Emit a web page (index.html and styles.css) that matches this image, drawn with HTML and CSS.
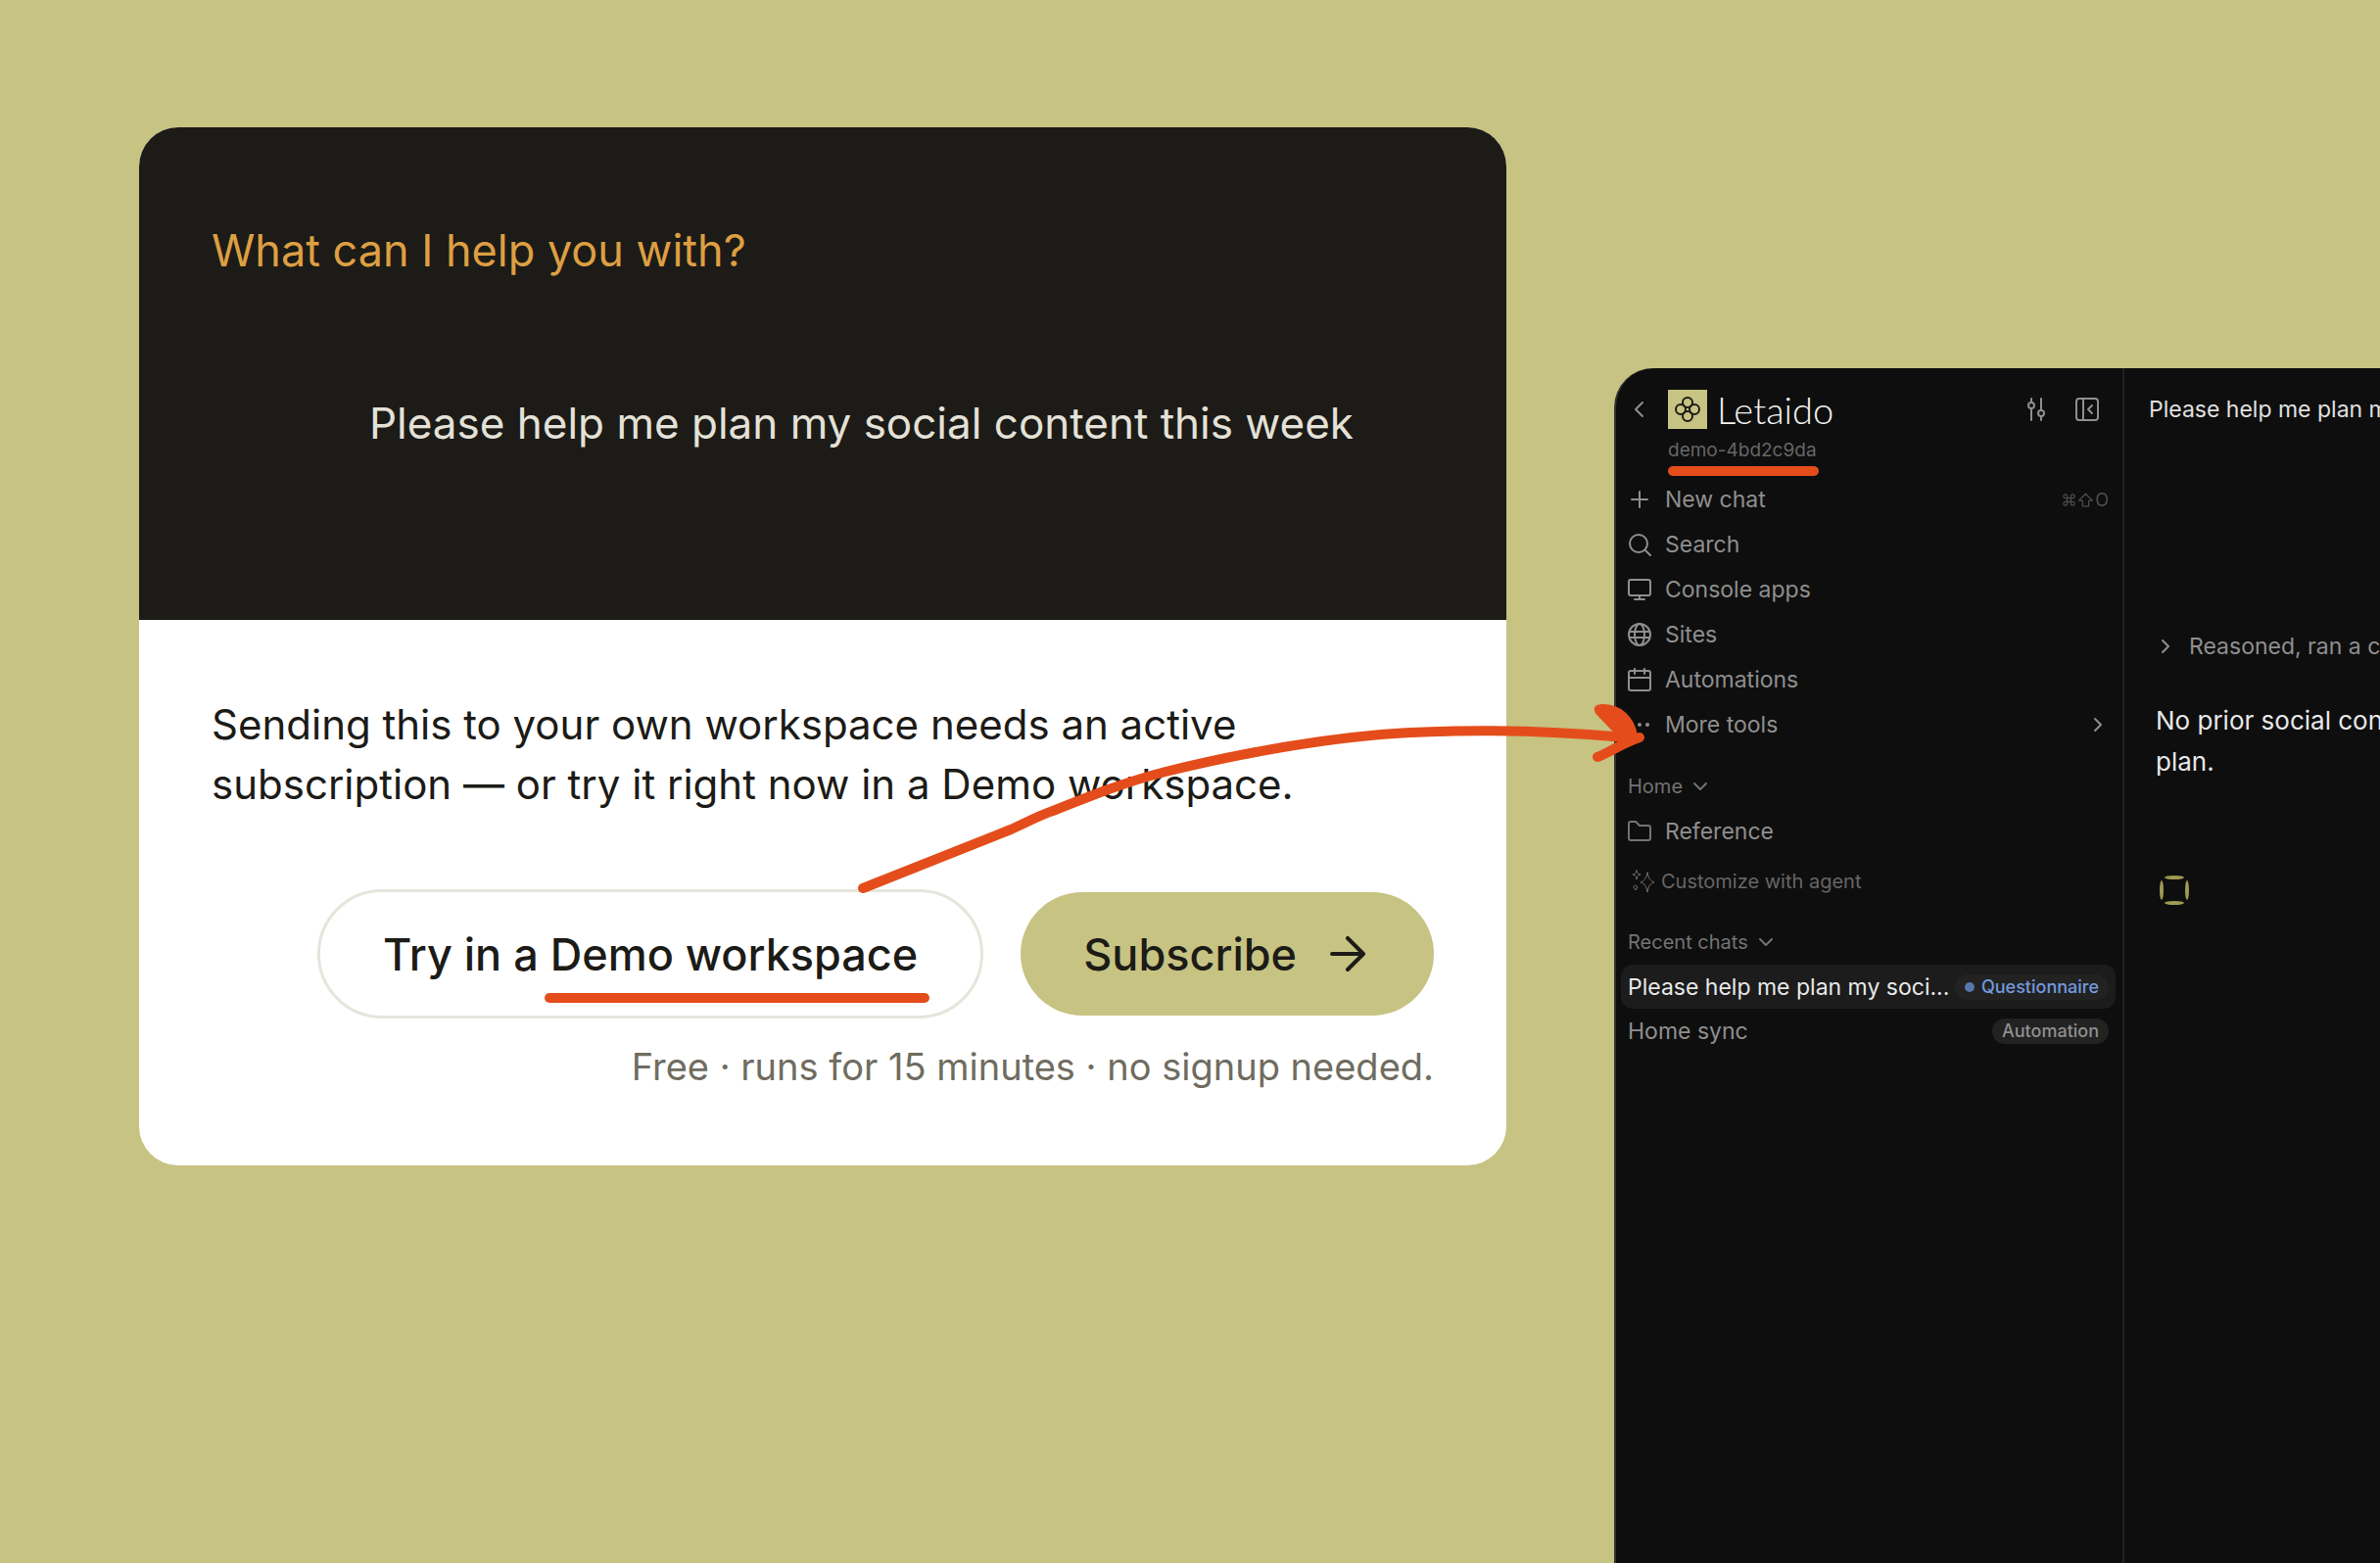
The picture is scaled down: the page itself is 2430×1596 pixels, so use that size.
FILE: index.html
```html
<!DOCTYPE html>
<html lang="en">
<head>
<meta charset="utf-8">
<title>Letaido</title>
<link rel="stylesheet" href="styles.css">
</head>
<body>
<main class="stage">
  <section class="card">
    <div class="card-top">
      <p class="prompt-label">What can I help you with?</p>
      <p class="prompt-text">Please help me plan my social content this week</p>
    </div>
    <div class="card-bottom">
      <p class="notice">Sending this to your own workspace needs an active subscription — or try it right now in a Demo workspace.</p>
      <div class="actions">
        <button class="btn btn-outline" type="button"><span>Try in a <span class="marked">Demo workspace</span></span></button>
        <button class="btn btn-solid" type="button">
          <span>Subscribe</span>
          <svg class="btn-arrow" viewBox="0 0 36 36" aria-hidden="true"><path d="M2 18H34M18 2L34 18L18 34"/></svg>
        </button>
      </div>
      <p class="footnote">Free · runs for 15 minutes · no signup needed.</p>
    </div>
    <svg class="pointer" viewBox="870 710 820 210" aria-hidden="true">
      <path class="pointer-line" d="M881 907L1032 847C1050 839 1060 833 1075 828C1110 814 1150 798 1190 788C1260 771 1340 756 1410 750C1490 744 1580 746 1660 753"/>
      <path class="pointer-line" d="M1631 773C1646 767 1656 759 1674 753"/>
      <path class="pointer-head" d="M1634 720C1655 719 1668 733 1671 751L1655 757C1650 747 1640 739 1630 728C1627 723 1630 720 1634 720Z"/>
    </svg>
  </section>

  <section class="app">
    <aside class="sidebar">
      <header class="brand-row">
        <button class="icon-btn back" type="button" aria-label="Back"><svg class="icon" viewBox="0 0 24 24"><path d="M15 5l-7 7 7 7"/></svg></button>
        <svg class="brand-mark" viewBox="0 0 40 40" aria-hidden="true">
          <rect width="40" height="40"/>
          <circle cx="20" cy="13" r="5"/><circle cx="27" cy="20" r="5"/><circle cx="20" cy="27" r="5"/><circle cx="13" cy="20" r="5"/>
        </svg>
        <span class="brand-name">Letaido</span>
        <button class="icon-btn" type="button" aria-label="Settings"><svg class="icon" viewBox="0 0 24 24"><path d="M7 1v4M7 11v12M17 1v12M17 19v4"/><circle cx="7" cy="8" r="3"/><circle cx="17" cy="16" r="3"/></svg></button>
        <button class="icon-btn" type="button" aria-label="Collapse sidebar"><svg class="icon" viewBox="0 0 24 24"><rect x="1" y="1" width="22" height="22" rx="3"/><path d="M8 1v22M17 8l-4 4 4 4"/></svg></button>
      </header>
      <p class="workspace"><span class="marked">demo-4bd2c9da</span></p>

      <nav class="menu">
        <a class="item" href="#"><svg class="icon" viewBox="0 0 24 24"><path d="M12 4v16M4 12h16"/></svg>New chat<kbd class="keys"><svg class="key" viewBox="0 0 24 24"><path d="M9 9h6v6H9zM9 9V6a3 3 0 1 0-3 3h3M15 9h3a3 3 0 1 0-3-3v3M15 15v3a3 3 0 1 0 3-3h-3M9 15H6a3 3 0 1 0 3 3v-3"/></svg><svg class="key" viewBox="0 0 24 24"><path d="M12 2L1 13h6v9h10v-9h6z"/></svg>O</kbd></a>
        <a class="item" href="#"><svg class="icon" viewBox="0 0 24 24"><circle cx="11" cy="11" r="9"/><path d="M18 18l5 5"/></svg>Search</a>
        <a class="item" href="#"><svg class="icon" viewBox="0 0 24 24"><rect x="1" y="2" width="22" height="16" rx="2"/><path d="M12 18v4M7 22h10"/></svg>Console apps</a>
        <a class="item" href="#"><svg class="icon" viewBox="0 0 24 24"><circle cx="12" cy="12" r="11"/><ellipse cx="12" cy="12" rx="5" ry="11"/><path d="M2 9h20M2 15h20"/></svg>Sites</a>
        <a class="item" href="#"><svg class="icon" viewBox="0 0 24 24"><rect x="1" y="3" width="22" height="20" rx="2"/><path d="M1 10h22M7 1v5M17 1v5"/></svg>Automations</a>
        <a class="item" href="#"><svg class="icon dots" viewBox="0 0 24 24"><circle cx="4" cy="12" r="2"/><circle cx="12" cy="12" r="2"/><circle cx="20" cy="12" r="2"/></svg>More tools<svg class="chevron end" viewBox="0 0 16 16"><path d="M5 2l6 6-6 6"/></svg></a>
      </nav>

      <h2 class="group">Home<svg class="chevron" viewBox="0 0 16 16"><path d="M2 5l6 6 6-6"/></svg></h2>
      <a class="item" href="#"><svg class="icon folder" viewBox="0 0 24 24"><path d="M1 4a2 2 0 0 1 2-2h5l4 4h9a2 2 0 0 1 2 2v11a2 2 0 0 1-2 2H3a2 2 0 0 1-2-2z"/></svg>Reference</a>
      <a class="customize" href="#"><svg class="icon sparkles" viewBox="0 0 24 24"><path d="M16 3c1 6 3 8 7 10c-4 1-6 4-7 10c-1-6-3-9-7-10c4-2 6-4 7-10zM5 1c1 3 1 3 4 4c-3 1-3 1-4 5c-1-4-1-4-4-5c3-1 3-1 4-4zM4 16l2 2-2 3-2-3z"/></svg>Customize with agent</a>

      <h2 class="group">Recent chats<svg class="chevron" viewBox="0 0 16 16"><path d="M2 5l6 6 6-6"/></svg></h2>
      <a class="chat chat-active" href="#"><span class="chat-title">Please help me plan my soci...</span><span class="tag tag-blue">Questionnaire</span></a>
      <a class="chat" href="#"><span class="chat-title">Home sync</span><span class="tag">Automation</span></a>
    </aside>

    <section class="thread">
      <h1 class="thread-title">Please help me plan my social content this week</h1>
      <button class="reasoning" type="button"><svg class="chevron" viewBox="0 0 16 16"><path d="M5 2l6 6-6 6"/></svg>Reasoned, ran a command</button>
      <p class="answer">No prior social content<br>plan.</p>
      <svg class="spinner" viewBox="0 0 32 32" aria-hidden="true"><ellipse cx="16" cy="3" rx="10" ry="2"/><ellipse cx="16" cy="29" rx="10" ry="2"/><ellipse cx="3" cy="16" rx="2" ry="10"/><ellipse cx="29" cy="16" rx="2" ry="10"/></svg>
    </section>
  </section>
</main>
</body>
</html>
```
FILE: styles.css
```css
* { box-sizing: border-box; }

body {
  margin: 0;
  background: #c7c382;
  font-family: Inter, "Liberation Sans", sans-serif;
  overflow: hidden;
}

p, h1, h2 { margin: 0; font-weight: 400; }
a { color: inherit; text-decoration: none; }
button { font: inherit; color: inherit; background: none; border: 0; padding: 0; cursor: pointer; }
svg { display: block; flex: none; fill: none; stroke: currentColor; stroke-linecap: round; stroke-linejoin: round; }

.stage {
  min-height: 100vh;
  display: grid;
  grid-template-columns: minmax(0, 1396px) minmax(0, 1fr);
  column-gap: 110px;
  padding-left: 142px;
}

/* Prompt card */
.card {
  position: relative;
  align-self: start;
  margin-top: 130px;
  border-radius: 40px;
  background: #fff;
  color: #1c1b17;
}
.card-top {
  height: 503px;
  padding: 98px 74px 0;
  border-radius: 40px 40px 0 0;
  background: #1c1b17;
  line-height: 56px;
}
.prompt-label { color: #dd9f42; font-size: 45px; }
.prompt-text { margin: 120px 82px 0 0; text-align: right; color: #e4e1d8; font-size: 44px; }
.card-bottom { padding: 76px 74px 76px; }
.notice { font-size: 42px; line-height: 61px; }
.actions { display: flex; justify-content: flex-end; align-items: center; gap: 38px; margin-top: 77px; }
.btn { display: flex; align-items: center; border-radius: 66px; font-size: 45px; font-weight: 500; white-space: nowrap; }
.btn-outline { height: 132px; padding: 0 64px; border: 3px solid #e6e5dc; }
.btn-solid { height: 126px; padding: 0 70px 0 64px; gap: 34px; background: #c7c382; }
.btn-arrow { width: 36px; height: 36px; stroke-width: 4; }
.footnote { margin-top: 24px; text-align: right; color: #6f6c60; font-size: 38px; line-height: 50px; }

/* Hand-drawn marks */
.marked { position: relative; }
.marked::after {
  content: "";
  position: absolute;
  left: -6px;
  right: -12px;
  bottom: -22px;
  height: 10px;
  border-radius: 5px;
  background: #e44d1b;
}
.workspace .marked::after { left: 0; right: -2px; bottom: -15px; }
.pointer { position: absolute; right: -152px; top: 580px; width: 820px; height: 210px; z-index: 2; color: #e44d1b; pointer-events: none; }
.pointer-line { stroke-width: 10; }
.pointer-head { fill: currentColor; stroke-width: 2; }

/* App window */
.app {
  display: grid;
  grid-template-columns: 519px minmax(0, 1fr);
  margin-top: 376px;
  border-left: 2px solid #333430;
  border-radius: 40px 0 0 0;
  background: #0e0e0e;
  color: #8f8f8f;
  overflow: hidden;
}
.sidebar { display: flex; flex-direction: column; padding: 22px 7px 0 5px; border-right: 2px solid #222; font-size: 23px; }
.icon { width: 24px; height: 24px; stroke-width: 2; }
.dots { fill: currentColor; stroke: none; }
.folder, .sparkles { color: #737373; }
.sparkles { stroke-width: 1; }
.brand-row { display: flex; align-items: center; height: 40px; padding: 0 17px 0 7px; }
.icon-btn { display: flex; margin-left: 28px; }
.back { margin: 0 17px 0 0; }
.brand-mark { width: 40px; height: 40px; fill: none; stroke: #1c1b17; stroke-width: 2; }
.brand-mark rect { fill: #c7c382; stroke: none; }
.brand-name { flex: 1; margin-left: 10px; color: #f2f2f2; font-family: Lato, Inter, sans-serif; font-weight: 300; font-size: 38px; line-height: 40px; }
.workspace { padding: 8px 0 0 48px; color: #666; font-size: 19px; line-height: 28px; }
.menu { margin-top: 13px; }
.item { display: flex; align-items: center; gap: 14px; height: 46px; padding: 0 7px 0 7px; }
.keys { display: flex; align-items: center; gap: 2px; margin-left: auto; color: #4d4d4d; font: inherit; font-size: 18px; }
.key { width: 15px; height: 15px; stroke-width: 2; }
.chevron { width: 16px; height: 16px; stroke-width: 2; }
.end { margin: 0 3px 0 auto; }
.group { display: flex; align-items: center; gap: 10px; height: 40px; margin: 20px 0 3px; padding-left: 7px; color: #737373; font-size: 20px; }
.customize { display: flex; align-items: center; gap: 6px; height: 44px; margin-top: 6px; padding-left: 11px; color: #666; font-size: 20px; }
.chat { display: flex; align-items: center; justify-content: space-between; height: 45px; padding: 0 7px; border-radius: 12px; white-space: nowrap; }
.chat-active { background: #1c1c1c; color: #e8e8e8; }
.tag { display: flex; align-items: center; gap: 7px; height: 26px; padding: 0 10px; border-radius: 13px; background: #222; color: #8f8f8f; font-size: 18px; font-weight: 500; }
.tag-blue { color: #7399dd; }
.tag-blue::before { content: ""; width: 10px; height: 10px; border-radius: 5px; background: #5577aa; }

.thread { display: flex; flex-direction: column; align-items: flex-start; padding: 28px 0 0 25px; white-space: nowrap; overflow: hidden; }
.thread-title { color: #e0e0e0; font-size: 23px; line-height: 28px; }
.reasoning { display: flex; align-items: center; gap: 16px; margin: 214px 0 0 9px; font-size: 23px; line-height: 28px; }
.answer { margin: 41px 0 0 7px; color: #e8e8e8; font-size: 26px; line-height: 42px; }
.spinner { width: 32px; height: 32px; margin: 94px 0 0 10px; fill: #9f9a52; stroke: none; }
```
